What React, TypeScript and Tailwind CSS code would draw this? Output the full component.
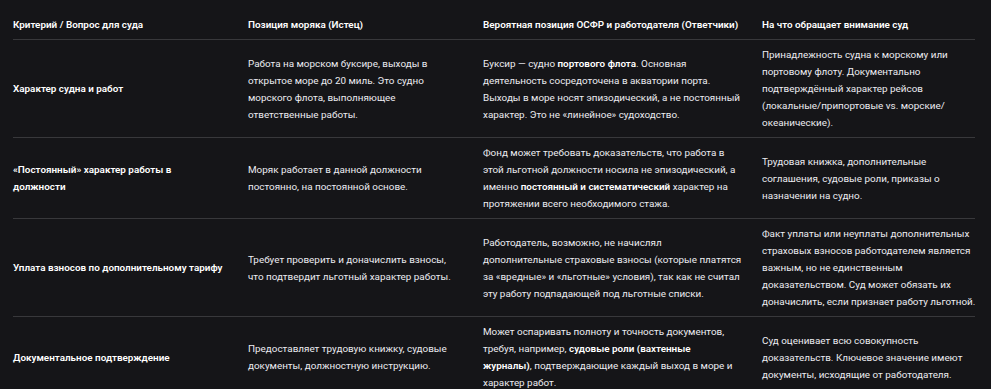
import type { ReactNode } from 'react'

// each cell is a list of lines, wrapped the same way as the source layout
type Cell = ReactNode[]
type Row = { criterion: Cell; seaman: Cell; defendant: Cell; court: Cell }

const B = ({ children }: { children: ReactNode }) => <b className="font-semibold text-white">{children}</b>

const ROWS: Row[] = [
  {
    criterion: ['Характер судна и работ'],
    seaman: [
      'Работа на морском буксире, выходы в',
      'открытое море до 20 миль. Это судно',
      'морского флота, выполняющее',
      'ответственные работы.',
    ],
    defendant: [
      <>Буксир — судно <B>портового флота</B>. Основная</>,
      'деятельность сосредоточена в акватории порта.',
      'Выходы в море носят эпизодический, а не постоянный',
      'характер. Это не «линейное» судоходство.',
    ],
    court: [
      'Принадлежность судна к морскому или',
      'портовому флоту. Документально',
      'подтверждённый характер рейсов',
      '(локальные/припортовые vs. морские/',
      'океанические).',
    ],
  },
  {
    criterion: ['«Постоянный» характер работы в', 'должности'],
    seaman: ['Моряк работает в данной должности', 'постоянно, на постоянной основе.'],
    defendant: [
      'Фонд может требовать доказательств, что работа в',
      'этой льготной должности носила не эпизодический, а',
      <>именно <B>постоянный и систематический</B> характер на</>,
      'протяжении всего необходимого стажа.',
    ],
    court: ['Трудовая книжка, дополнительные', 'соглашения, судовые роли, приказы о', 'назначении на судно.'],
  },
  {
    criterion: ['Уплата взносов по дополнительному тарифу'],
    seaman: ['Требует проверить и доначислить взносы,', 'что подтвердит льготный характер работы.'],
    defendant: [
      'Работодатель, возможно, не начислял',
      'дополнительные страховые взносы (которые платятся',
      'за «вредные» и «льготные» условия), так как не считал',
      'эту работу подпадающей под льготные списки.',
    ],
    court: [
      'Факт уплаты или неуплаты дополнительных',
      'страховых взносов работодателем является',
      'важным, но не единственным',
      'доказательством. Суд может обязать их',
      'доначислить, если признает работу льготной.',
    ],
  },
  {
    criterion: ['Документальное подтверждение'],
    seaman: ['Предоставляет трудовую книжку, судовые', 'документы, должностную инструкцию.'],
    defendant: [
      'Может оспаривать полноту и точность документов,',
      <>требуя, например, <B>судовые роли (вахтенные</B></>,
      <><B>журналы)</B>, подтверждающие каждый выход в море и</>,
      'характер работ.',
    ],
    court: ['Суд оценивает всю совокупность', 'доказательств. Ключевое значение имеют', 'документы, исходящие от работодателя.'],
  },
]

const Lines = ({ lines }: { lines: Cell }) => (
  <>
    {lines.map((l, i) => (
      <div key={i} className="whitespace-nowrap">{l}</div>
    ))}
  </>
)

export default function App() {
  return (
    <div
      className="w-[991px] h-[389px] overflow-hidden bg-[#151518] text-[#ececf1] pl-[13px] pt-[10px]"
      style={{ fontFamily: 'Roboto, "Noto Sans", sans-serif' }}
    >
      <table className="w-[962px] table-fixed border-collapse text-[9.9px] leading-[17px]">
        <colgroup>
          <col className="w-[235px]" />
          <col className="w-[235px]" />
          <col className="w-[279px]" />
          <col className="w-[213px]" />
        </colgroup>
        <thead>
          <tr className="border-b border-[#38383b] text-white">
            <th className="text-left font-semibold py-[6px] whitespace-nowrap">Критерий / Вопрос для суда</th>
            <th className="text-left font-semibold py-[6px] whitespace-nowrap">Позиция моряка (Истец)</th>
            <th className="text-left font-semibold py-[6px] whitespace-nowrap">Вероятная позиция ОСФР и работодателя (Ответчики)</th>
            <th className="text-left font-semibold py-[6px] whitespace-nowrap">На что обращает внимание суд</th>
          </tr>
        </thead>
        <tbody>
          {ROWS.map((r, i) => (
            <tr key={i} className="border-b border-[#38383b]">
              <td className="align-middle font-semibold text-white py-[6px]"><Lines lines={r.criterion} /></td>
              <td className="align-middle py-[6px]"><Lines lines={r.seaman} /></td>
              <td className="align-middle py-[6px]"><Lines lines={r.defendant} /></td>
              <td className="align-middle py-[6px]"><Lines lines={r.court} /></td>
            </tr>
          ))}
        </tbody>
      </table>
    </div>
  )
}
